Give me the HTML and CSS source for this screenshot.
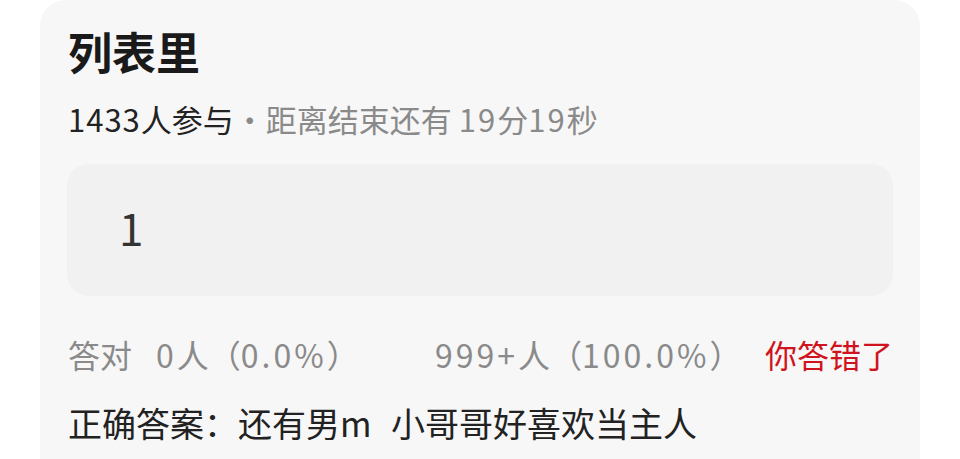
FILE: index.html
```html
<!DOCTYPE html>
<html lang="zh-CN">
<head>
<meta charset="utf-8">
<link rel="stylesheet" href="styles.css">
</head>
<body>
<div class="card">
  <h1 class="title">列表里</h1>
  <div class="meta"><span class="meta-count"><span class="num num-tight">1433</span>人参与</span><span class="meta-dot">·</span><span class="meta-time">距离结束还有 <span class="num num-meta">19</span>分<span class="num num-meta">19</span>秒</span></div>
  <div class="answer-box"><span class="answer-value">1</span></div>
  <div class="stats">
    <span class="stat stat-correct">答对<span class="num num-stat stat-gap">0</span>人（<span class="num num-stat">0.0%</span>）</span>
    <span class="stat stat-other"><span class="num num-stat">999+</span>人（<span class="num num-stat">100.0%</span>）</span>
    <span class="stat-result">你答错了</span>
  </div>
  <div class="correct">正确答案：还有男<span class="latin-gap">m</span> 小哥哥好喜欢当主人</div>
</div>
</body>
</html>
```

FILE: styles.css
```css
html, body {
  margin: 0;
  padding: 0;
  background: #ffffff;
  height: 100%;
  overflow: hidden;
}

body {
  font-family: "Noto Sans CJK SC", "Noto Sans", sans-serif;
  color: #1f1f1f;
}

.card {
  margin-left: 40px;
  width: 880px;
  box-sizing: border-box;
  height: 459px;
  background: #f7f7f7;
  border-radius: 26px 26px 0 0;
  padding: 20px 27px 0 28px;
}

.title {
  margin: 0;
  font-size: 44px;
  line-height: 62px;
  font-weight: 700;
  color: #1a1a1a;
}

.meta {
  margin-top: 15px;
  font-size: 31px;
  line-height: 44px;
  white-space: nowrap;
}

.meta-count {
  color: #222222;
}

.meta-dot {
  display: inline-block;
  width: 32px;
  text-align: center;
}

.meta-dot,
.meta-time {
  color: #8a8a8a;
}

.num-tight {
  letter-spacing: 1px;
}

.num-meta {
  letter-spacing: 2px;
}

.answer-box {
  margin-top: 23px;
  height: 132px;
  box-sizing: border-box;
  background: #f1f1f1;
  border-radius: 22px;
  display: flex;
  align-items: center;
  padding-left: 52px;
  margin-left: -1px;
  padding-bottom: 6px;
}

.answer-value {
  font-size: 44px;
  color: #333333;
  line-height: 1;
}

.stats {
  margin-top: 36px;
  display: flex;
  align-items: center;
  font-size: 32px;
  line-height: 44px;
  white-space: nowrap;
}

.stat {
  color: #8a8a8a;
}

.num-stat {
  letter-spacing: 3px;
}

.stat-gap {
  margin-left: 24px;
}

.stat-correct {
  width: 367px;
}

.stat-result {
  margin-left: auto;
  color: #cf1420;
}

.correct {
  margin-top: 25px;
  font-size: 34px;
  line-height: 44px;
  color: #222222;
  white-space: nowrap;
}

.latin-gap {
  margin-right: 12px;
}
```
